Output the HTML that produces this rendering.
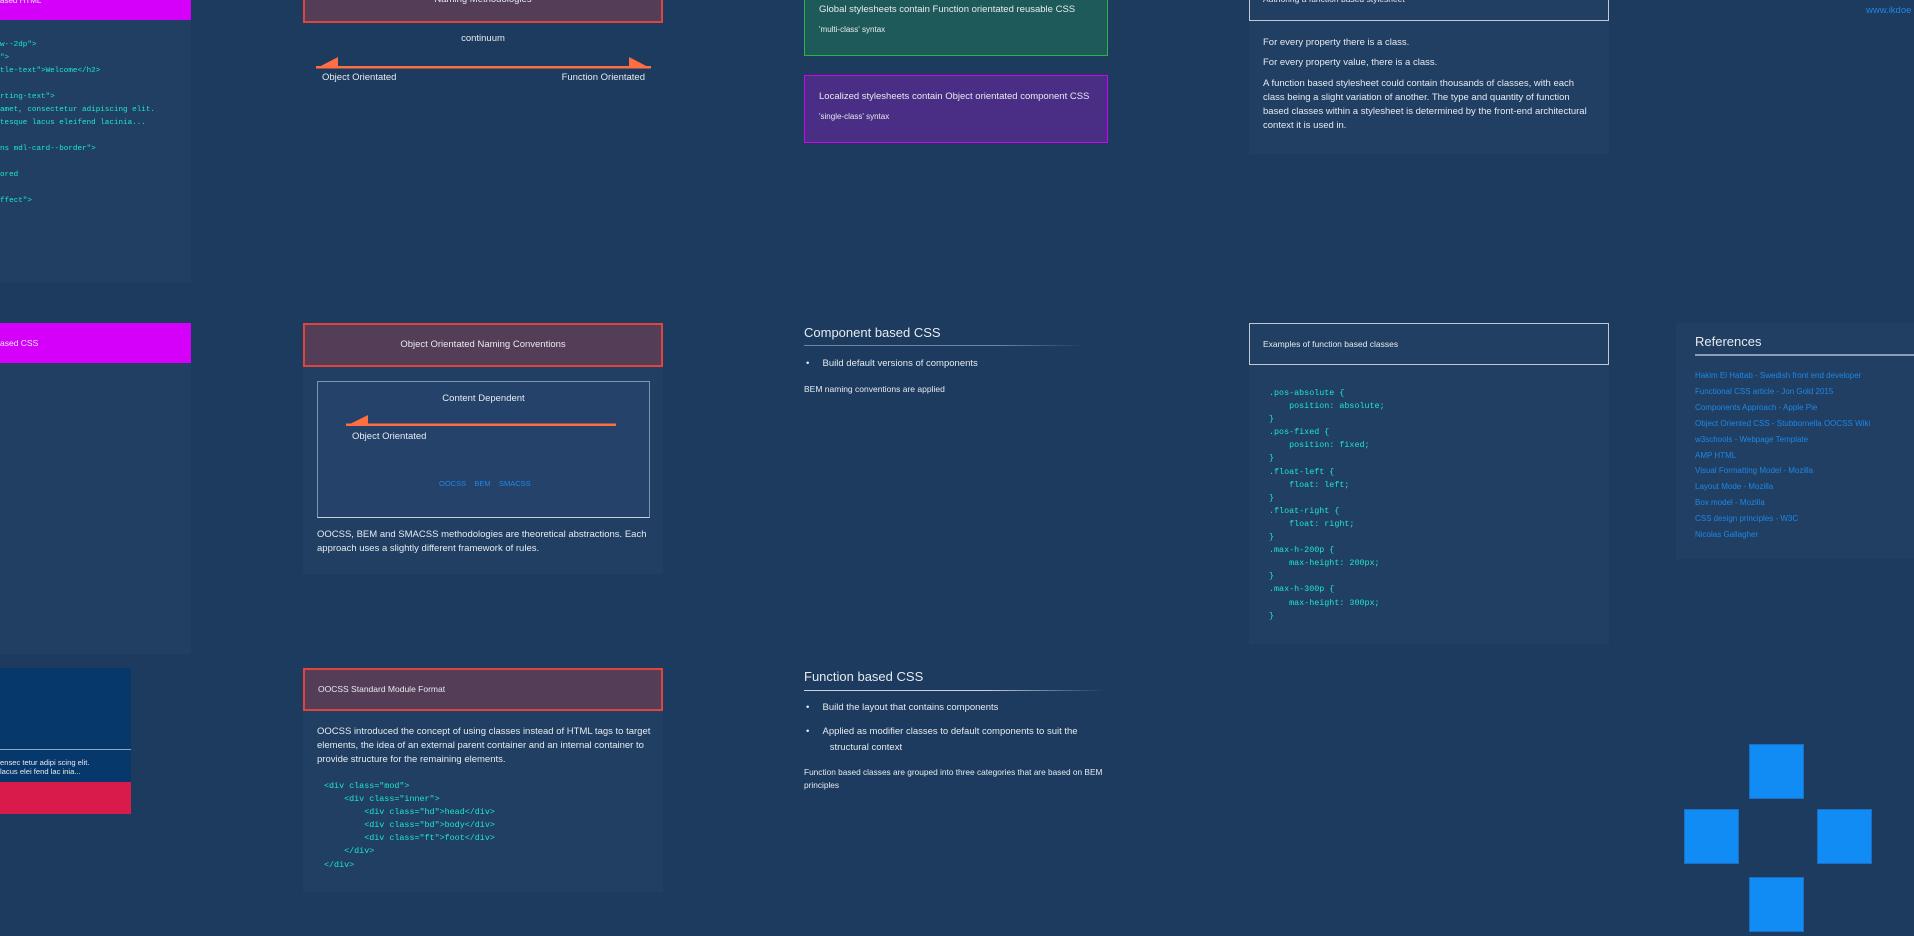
<!DOCTYPE html>
<html><head><meta charset="utf-8"><style>
*{margin:0;padding:0;box-sizing:border-box}
html,body{width:1914px;height:936px;overflow:hidden;background:#1d3a5f;font-family:"Liberation Sans",sans-serif;color:#e6ebf0}
.a{position:absolute;white-space:nowrap}
.card{position:absolute;background:#213e63}
.code{font-family:"Liberation Mono",monospace;font-size:8.4px;color:#1de9c6;line-height:13px}
.t{font-size:9.5px}
.red{position:absolute;background:#533d57;border:2px solid #e0443a}
.ref{font-size:8px;color:#1e88e5;line-height:15.9px}
.sq{position:absolute;width:55px;height:55px;background:#128cf5;border:1px solid #1a6fc0}
</style></head><body>

<div class="card" style="left:0;top:0;width:191px;height:283px"></div>
<div class="a" style="left:0;top:0;width:191px;height:20px;background:#d500f9"></div>
<div class="a t" style="left:0;top:-4px;font-size:8px">ased HTML</div>
<div class="a code" style="left:0;top:39px;font-size:7.6px">w--2dp"&gt;<br>"&gt;<br>tle-text"&gt;Welcome&lt;/h2&gt;<br><br>rting-text"&gt;<br>amet, consectetur adipiscing elit.<br>tesque lacus eleifend lacinia...<br><br>ns mdl-card--border"&gt;<br><br>ored<br><br>ffect"&gt;</div>

<div class="card" style="left:0;top:323px;width:191px;height:331px"></div>
<div class="a" style="left:0;top:323px;width:191px;height:40px;background:#d500f9"></div>
<div class="a" style="left:0;top:338px;font-size:8.5px">ased CSS</div>

<div class="a" style="left:0;top:668px;width:131px;height:146px;background:#07386b"></div>
<div class="a" style="left:0;top:749px;width:131px;height:1px;background:#8fa6c0"></div>
<div class="a" style="left:0;top:758px;font-size:7.6px;line-height:9px">ensec tetur adipi scing elit.<br>lacus elei fend lac inia...</div>
<div class="a" style="left:0;top:782px;width:131px;height:32px;background:#d81b4a"></div>

<div class="red" style="left:303px;top:-20px;width:360px;height:43px"></div>
<div class="a t" style="left:303px;top:-6px;width:360px;text-align:center">Naming Methodologies</div>
<div class="a t" style="left:303px;top:33px;width:360px;text-align:center">continuum</div>
<svg class="a" style="left:310px;top:54px" width="350" height="16"><rect x="6" y="12" width="335" height="2.5" fill="#ff6e40"/><polygon points="6,14.5 28,3 28,14.5" fill="#ff6e40"/><polygon points="341,14.5 319,3 319,14.5" fill="#ff6e40"/></svg>
<div class="a t" style="left:322px;top:72px">Object Orientated</div>
<div class="a t" style="left:500px;top:72px;width:145px;text-align:right">Function Orientated</div>

<div class="a" style="left:804px;top:-10px;width:304px;height:66px;background:#1f5a5a;border:1px solid #2db34a"></div>
<div class="a t" style="left:819px;top:4px">Global stylesheets contain Function orientated reusable CSS</div>
<div class="a" style="left:819px;top:25px;font-size:8px">'multi-class' syntax</div>
<div class="a" style="left:804px;top:75px;width:304px;height:68px;background:#4a2d84;border:1px solid #d600f0"></div>
<div class="a t" style="left:819px;top:91px">Localized stylesheets contain Object orientated component CSS</div>
<div class="a" style="left:819px;top:112px;font-size:8px">'single-class' syntax</div>

<div class="card" style="left:1249px;top:0;width:360px;height:154px"></div>
<div class="a" style="left:1249px;top:-10px;width:360px;height:31px;border:1.5px solid #c0c8d2"></div>
<div class="a" style="left:1263px;top:-6px;font-size:8.5px">Authoring a function based stylesheet</div>
<div class="a t" style="left:1263px;top:37px">For every property there is a class.</div>
<div class="a t" style="left:1263px;top:57px">For every property value, there is a class.</div>
<div class="a t" style="left:1263px;top:77px;line-height:14px;white-space:normal;width:330px">A function based stylesheet could contain thousands of classes, with each class being a slight variation of another. The type and quantity of function based classes within a stylesheet is determined by the front-end architectural context it is used in.</div>
<div class="a" style="left:1866px;top:5px;font-size:9.5px;color:#1e88e5">www.ikdoe</div>

<div class="card" style="left:303px;top:323px;width:360px;height:251px"></div>
<div class="red" style="left:303px;top:323px;width:360px;height:44px"></div>
<div class="a t" style="left:303px;top:339px;width:360px;text-align:center">Object Orientated Naming Conventions</div>
<div class="a" style="left:317px;top:381px;width:333px;height:137px;background:#25426a;border:1px solid #7f94ad;border-bottom:1.5px solid #c8d0da"></div>
<div class="a t" style="left:317px;top:393px;width:333px;text-align:center">Content Dependent</div>
<svg class="a" style="left:344px;top:414px" width="276" height="14"><rect x="2" y="9.5" width="270" height="2.5" fill="#ff6e40"/><polygon points="2,12 24,1 24,12" fill="#ff6e40"/></svg>
<div class="a t" style="left:352px;top:431px">Object Orientated</div>
<div class="a" style="left:439px;top:479px;font-size:7.5px;color:#1e88e5">OOCSS &nbsp;&nbsp;&nbsp;BEM &nbsp;&nbsp;&nbsp;SMACSS</div>
<div class="a t" style="left:317px;top:528px;line-height:14px">OOCSS, BEM and SMACSS methodologies are theoretical abstractions. Each<br>approach uses a slightly different framework of rules.</div>

<div class="a" style="left:804px;top:325px;font-size:13px">Component based CSS</div>
<div class="a" style="left:804px;top:345px;width:280px;height:1px;background:linear-gradient(90deg,#6a84a2,#6a84a2 70%,rgba(106,132,162,0))"></div>
<div class="a t" style="left:806px;top:358px">•&nbsp;&nbsp;&nbsp;&nbsp;&nbsp;Build default versions of components</div>
<div class="a" style="left:804px;top:384px;font-size:8.5px">BEM naming conventions are applied</div>

<div class="card" style="left:1249px;top:323px;width:360px;height:321px"></div>
<div class="a" style="left:1249px;top:323px;width:360px;height:42px;border:1.5px solid #c0c8d2"></div>
<div class="a" style="left:1263px;top:339px;font-size:8.5px">Examples of function based classes</div>
<div class="a code" style="left:1269px;top:387px;line-height:13.1px;white-space:pre">.pos-absolute {
    position: absolute;
}
.pos-fixed {
    position: fixed;
}
.float-left {
    float: left;
}
.float-right {
    float: right;
}
.max-h-200p {
    max-height: 200px;
}
.max-h-300p {
    max-height: 300px;
}</div>

<div class="card" style="left:1676px;top:323px;width:238px;height:236px"></div>
<div class="a" style="left:1695px;top:334px;font-size:13px">References</div>
<div class="a" style="left:1695px;top:354px;width:219px;height:1.5px;background:#8aa0ba"></div>
<div class="a ref" style="left:1695px;top:368px">Hakim El Hattab - Swedish front end developer<br>Functional CSS article - Jon Gold 2015<br>Components Approach - Apple Pie<br>Object Oriented CSS - Stubbornella OOCSS Wiki<br>w3schools - Webpage Template<br>AMP HTML<br>Visual Formatting Model - Mozilla<br>Layout Mode - Mozilla<br>Box model - Mozilla<br>CSS design principles - W3C<br>Nicolas Gallagher</div>

<div class="card" style="left:303px;top:668px;width:360px;height:224px"></div>
<div class="red" style="left:303px;top:668px;width:360px;height:43px"></div>
<div class="a" style="left:318px;top:684px;font-size:8.5px">OOCSS Standard Module Format</div>
<div class="a t" style="left:317px;top:725px;line-height:14px">OOCSS introduced the concept of using classes instead of HTML tags to target<br>elements, the idea of an external parent container and an internal container to<br>provide structure for the remaining elements.</div>
<div class="a code" style="left:324px;top:780px;line-height:13.1px;white-space:pre">&lt;div class="mod"&gt;
    &lt;div class="inner"&gt;
        &lt;div class="hd"&gt;head&lt;/div&gt;
        &lt;div class="bd"&gt;body&lt;/div&gt;
        &lt;div class="ft"&gt;foot&lt;/div&gt;
    &lt;/div&gt;
&lt;/div&gt;</div>

<div class="a" style="left:804px;top:669px;font-size:13px">Function based CSS</div>
<div class="a" style="left:804px;top:690px;width:300px;height:1px;background:linear-gradient(90deg,#c8d2de,#c8d2de 60%,rgba(200,210,222,0))"></div>
<div class="a t" style="left:806px;top:702px">•&nbsp;&nbsp;&nbsp;&nbsp;&nbsp;Build the layout that contains components</div>
<div class="a t" style="left:806px;top:724px;line-height:16px">•&nbsp;&nbsp;&nbsp;&nbsp;&nbsp;Applied as modifier classes to default components to suit the<br>&nbsp;&nbsp;&nbsp;&nbsp;&nbsp;&nbsp;&nbsp;&nbsp;&nbsp;structural context</div>
<div class="a" style="left:804px;top:766px;font-size:8.3px;line-height:13px">Function based classes are grouped into three categories that are based on BEM<br>principles</div>

<div class="sq" style="left:1749px;top:744px"></div>
<div class="sq" style="left:1684px;top:809px"></div>
<div class="sq" style="left:1817px;top:809px"></div>
<div class="sq" style="left:1749px;top:877px"></div>
</body></html>
